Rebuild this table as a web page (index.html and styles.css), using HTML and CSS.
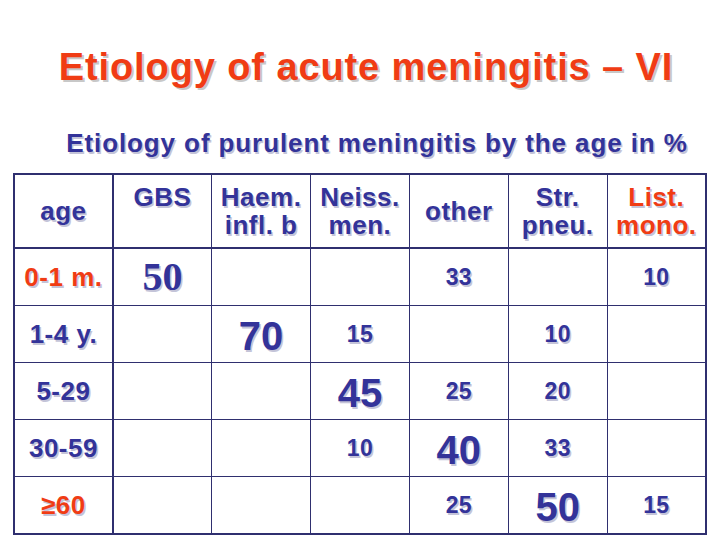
FILE: index.html
```html
<!DOCTYPE html>
<html>
<head>
<meta charset="utf-8">
<link rel="stylesheet" href="styles.css">
</head>
<body>
<div class="slide">
  <h1 class="title">Etiology of acute meningitis – VI</h1>
  <h2 class="subtitle">Etiology of purulent meningitis by the age in %</h2>
  <table class="grid">
    <tr class="head">
      <th class="age-col">age</th>
      <th>GBS<br>&nbsp;</th>
      <th>Haem.<br>infl. b</th>
      <th>Neiss.<br>men.</th>
      <th>other</th>
      <th>Str.<br>pneu.</th>
      <th class="red">List.<br>mono.</th>
    </tr>
    <tr>
      <td class="age-col red">0-1 m.</td>
      <td class="serif">50</td>
      <td></td>
      <td></td>
      <td class="small">33</td>
      <td></td>
      <td class="small">10</td>
    </tr>
    <tr>
      <td class="age-col">1-4 y.</td>
      <td></td>
      <td class="big">70</td>
      <td class="small">15</td>
      <td></td>
      <td class="small">10</td>
      <td></td>
    </tr>
    <tr>
      <td class="age-col">5-29</td>
      <td></td>
      <td></td>
      <td class="big">45</td>
      <td class="small">25</td>
      <td class="small">20</td>
      <td></td>
    </tr>
    <tr>
      <td class="age-col">30-59</td>
      <td></td>
      <td></td>
      <td class="small">10</td>
      <td class="big">40</td>
      <td class="small">33</td>
      <td></td>
    </tr>
    <tr>
      <td class="age-col red">≥60</td>
      <td></td>
      <td></td>
      <td></td>
      <td class="small">25</td>
      <td class="big">50</td>
      <td class="small">15</td>
    </tr>
  </table>
</div>
</body>
</html>
```

FILE: styles.css
```css
html, body {
  margin: 0;
  padding: 0;
  background: #ffffff;
}

.slide {
  width: 720px;
  height: 540px;
  overflow: hidden;
  font-family: "Liberation Sans", Arial, sans-serif;
  font-weight: bold;
  color: #333399;
}

.title {
  margin: 45px 0 0 0;
  padding-left: 12px;
  font-size: 38px;
  line-height: 44px;
  font-weight: bold;
  color: #f03c14;
  text-align: center;
  text-shadow: 2px 2px 0 #c8c8c8;
  letter-spacing: 0.9px;
}

.subtitle {
  margin: 39px 0 0 0;
  padding-left: 34px;
  font-size: 26px;
  line-height: 30px;
  font-weight: bold;
  color: #333399;
  text-align: center;
  text-shadow: 1.5px 1.5px 0 #c4c4d8;
  letter-spacing: 0.9px;
}

.grid {
  margin: 15px 0 0 13px;
  border-collapse: collapse;
  table-layout: fixed;
  width: 694px;
  border: 2.5px solid #2f2f6f;
}

.grid th,
.grid td {
  padding: 0;
  border: 1px solid #2f2f6f;
  text-align: center;
  vertical-align: middle;
  color: #333399;
  text-shadow: 1.5px 1.5px 0 #c4c4d8;
  letter-spacing: 0.5px;
}

.grid .age-col {
  border-right-width: 2px;
}

.head th {
  height: 72px;
  font-size: 26px;
  line-height: 28px;
  border-bottom-width: 2px;
}

.grid td {
  height: 56px;
  font-size: 26px;
  line-height: 30px;
}

.grid .red {
  color: #f03c14;
}

.grid td.small {
  font-size: 23px;
  letter-spacing: 0.3px;
}

.grid td.big {
  height: 52px;
  padding-top: 4px;
  font-size: 40px;
  line-height: 40px;
  letter-spacing: 0;
}

.grid td.serif {
  font-family: "Liberation Serif", "Times New Roman", serif;
  font-size: 40px;
  line-height: 40px;
  letter-spacing: 0;
}
```
